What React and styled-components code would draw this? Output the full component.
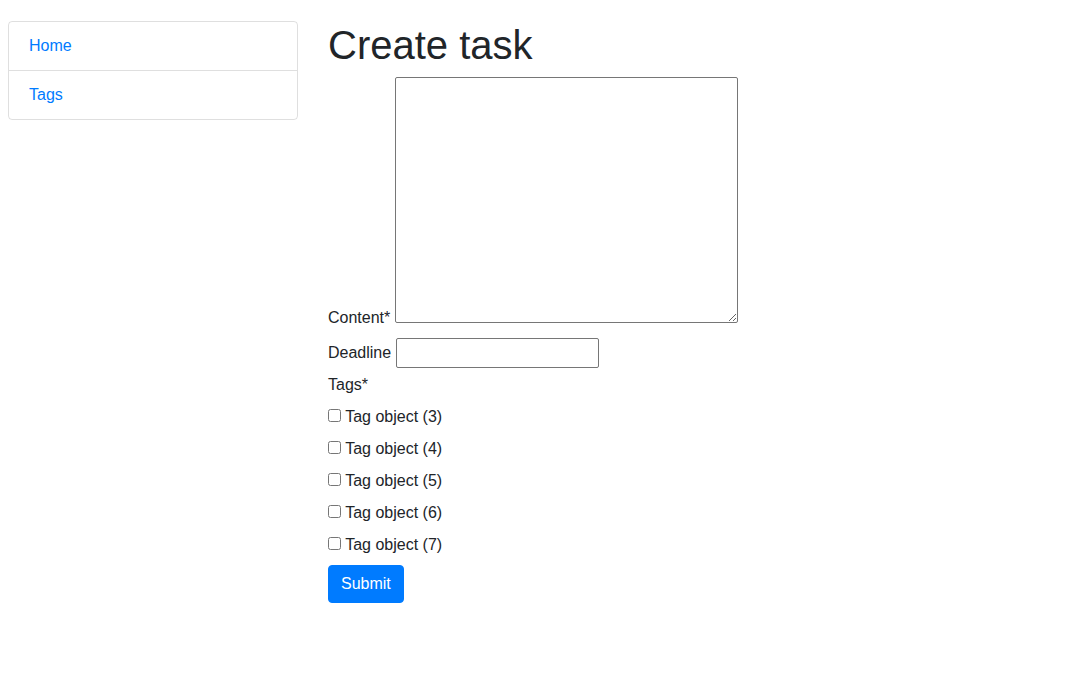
import React from "react";
import styled, { createGlobalStyle } from "styled-components";

const GlobalStyle = createGlobalStyle`
  *, *::before, *::after {
    box-sizing: border-box;
  }
  body {
    margin: 0;
    font-family: "Liberation Sans", Arial, sans-serif;
    font-size: 16px;
    line-height: 1.5;
    color: #212529;
    background: #fff;
  }
`;

const Page = styled.div`
  display: flex;
  align-items: flex-start;
  gap: 30px;
  padding: 21px 8px;
`;

const Sidebar = styled.nav`
  width: 290px;
  flex-shrink: 0;
  display: flex;
  flex-direction: column;
  border: 1px solid rgba(0, 0, 0, 0.125);
  border-radius: 4px;
`;

const NavItem = styled.a`
  display: block;
  padding: 12px 20px;
  color: #007bff;
  text-decoration: none;
  border-top: ${({ first }) => (first ? "none" : "1px solid rgba(0, 0, 0, 0.125)")};
`;

const Main = styled.main`
  flex: 1;
`;

const Title = styled.h1`
  margin: 0 0 8px;
  font-size: 40px;
  font-weight: 500;
  line-height: 1.2;
`;

const Field = styled.div``;

const Label = styled.label`
  display: inline-block;
  margin-bottom: 8px;
`;

const TextArea = styled.textarea`
  width: 343px;
  height: 246px;
  padding: 2px;
  font: inherit;
  border: 1px solid #767676;
  border-radius: 2px;
  overflow: auto;
  resize: both;
`;

const TextInput = styled.input`
  width: 203px;
  height: 30px;
  padding: 1px 2px;
  font: inherit;
  border: 1px solid #767676;
  border-radius: 2px;
`;

const Checkbox = styled.input`
  width: 13px;
  height: 13px;
  margin: 0;
  padding: 0;
`;

const SubmitButton = styled.button`
  padding: 6px 12px;
  font: inherit;
  line-height: 1.5;
  color: #fff;
  background: #007bff;
  border: 1px solid #007bff;
  border-radius: 4px;
  cursor: pointer;
`;

const tags = [3, 4, 5, 6, 7];

export default function App() {
  return (
    <>
      <GlobalStyle />
      <Page>
        <Sidebar>
          <NavItem href="#" first>Home</NavItem>
          <NavItem href="#">Tags</NavItem>
        </Sidebar>
        <Main>
          <Title>Create task</Title>
          <form onSubmit={(e) => e.preventDefault()}>
            <Field>
              <Label htmlFor="content">Content*</Label> <TextArea id="content" />
            </Field>
            <Field>
              <Label htmlFor="deadline">Deadline</Label> <TextInput id="deadline" type="text" />
            </Field>
            <Field>
              <Label>Tags*</Label>
              {tags.map((n) => (
                <div key={n}>
                  <Label>
                    <Checkbox type="checkbox" /> Tag object ({n})
                  </Label>
                </div>
              ))}
            </Field>
            <SubmitButton type="submit">Submit</SubmitButton>
          </form>
        </Main>
      </Page>
    </>
  );
}
